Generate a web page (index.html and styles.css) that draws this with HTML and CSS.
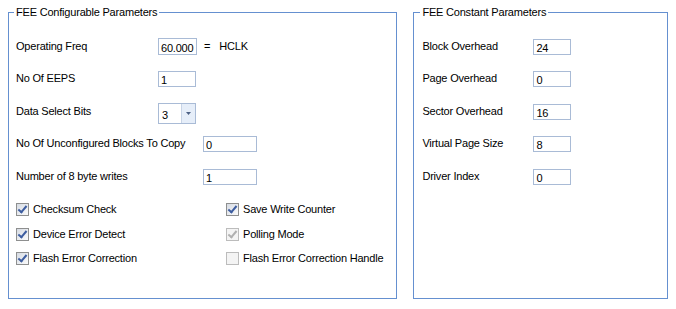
FILE: index.html
```html
<!DOCTYPE html>
<html lang="en">
<head>
	<meta charset="UTF-8">
	<title>FEE Parameters</title>
	<link rel="stylesheet" href="styles.css">
</head>
<body>
	<div class="panels">
		<fieldset class="group group-config">
			<legend>FEE Configurable Parameters</legend>
			<div class="fields">
				<div class="row">
					<label class="lbl">Operating Freq</label>
					<input class="txt freq" value="60.000">
					<span class="eq">=</span>
					<span class="unit">HCLK</span>
				</div>
				<div class="row">
					<label class="lbl">No Of EEPS</label>
					<input class="txt" value="1">
				</div>
				<div class="row">
					<label class="lbl">Data Select Bits</label>
					<div class="combo">
						<span class="combo-val">3</span>
						<span class="combo-btn">
							<svg width="5" height="3" viewBox="0 0 5 3"><path d="M0 0h5L2.5 3z" fill="#4d6185"/></svg>
						</span>
					</div>
				</div>
				<div class="row">
					<label class="lbl lbl-wide">No Of Unconfigured Blocks To Copy</label>
					<input class="txt txt-wide" value="0">
				</div>
				<div class="row">
					<label class="lbl lbl-wide">Number of 8 byte writes</label>
					<input class="txt txt-wide" value="1">
				</div>
			</div>
			<div class="checks">
				<div class="chk"><span class="box on"></span>Checksum Check</div>
				<div class="chk"><span class="box on"></span>Save Write Counter</div>
				<div class="chk"><span class="box on"></span>Device Error Detect</div>
				<div class="chk"><span class="box on off"></span>Polling Mode</div>
				<div class="chk"><span class="box on"></span>Flash Error Correction</div>
				<div class="chk"><span class="box off"></span>Flash Error Correction Handle</div>
			</div>
		</fieldset>
		<fieldset class="group group-const">
			<legend>FEE Constant Parameters</legend>
			<div class="fields">
				<div class="row">
					<label class="lbl lbl-const">Block Overhead</label>
					<input class="txt" value="24">
				</div>
				<div class="row">
					<label class="lbl lbl-const">Page Overhead</label>
					<input class="txt" value="0">
				</div>
				<div class="row">
					<label class="lbl lbl-const">Sector Overhead</label>
					<input class="txt" value="16">
				</div>
				<div class="row">
					<label class="lbl lbl-const">Virtual Page Size</label>
					<input class="txt" value="8">
				</div>
				<div class="row">
					<label class="lbl lbl-const">Driver Index</label>
					<input class="txt" value="0">
				</div>
			</div>
		</fieldset>
	</div>
</body>
</html>
```
FILE: styles.css
```css
* {
	box-sizing: border-box;
}

body {
	margin: 6px 8px;
	background: #fff;
	color: #000;
	font-family: "Liberation Sans", Arial, sans-serif;
	font-size: 11px;
	line-height: 13px;
	letter-spacing: -0.2px;
}

.panels {
	display: flex;
	gap: 16px;
}

.group {
	margin: 0;
	height: 293px;
	min-width: 0;
	padding: 20px 7px 0;
	border: 1px solid #6590d0;
}

.group-config {
	width: 390px;
}

.group-const {
	width: 255px;
	padding-left: 8px;
}

.group legend {
	margin-left: -2px;
	padding: 0 2px;
	line-height: 13px;
}

.fields {
	display: grid;
	grid-template-rows: 32px 33px 32px 33px 34px;
}

.row {
	display: flex;
	align-items: flex-start;
}

.lbl {
	width: 142px;
	margin-top: 1px;
	white-space: nowrap;
}

.lbl-wide {
	width: 187px;
}

.lbl-const {
	width: 111px;
}

.txt {
	width: 38px;
	height: 16px;
	margin: 0;
	padding: 2px 2px 0;
	border: 1px solid #a9bbd6;
	font: inherit;
	letter-spacing: inherit;
	line-height: 13px;
	color: #000;
	background: #fff;
	outline: none;
}

.freq {
	width: 39px;
	height: 17px;
	margin-top: -1px;
}

.txt-wide {
	width: 54px;
}

.eq {
	margin: 1px 0 0 7px;
}

.unit {
	margin: 1px 0 0 9px;
}

.combo {
	display: flex;
	width: 38px;
	height: 21px;
	margin-top: -1px;
	border: 1px solid #a9bbd6;
}

.combo-val {
	flex: 1;
	padding: 5px 0 0 3px;
}

.combo-btn {
	display: flex;
	align-items: center;
	justify-content: center;
	width: 14px;
	border-left: 1px solid #c8d4e6;
	background: #e6eef9;
}

.checks {
	display: grid;
	grid-template-columns: 210px auto;
	grid-template-rows: 25px 24px 24px;
}

.chk {
	display: flex;
	align-items: flex-start;
	gap: 4px;
	white-space: nowrap;
}

.box {
	position: relative;
	width: 13px;
	height: 13px;
	margin-top: 0;
	border: 1px solid #8e8f8f;
	background: linear-gradient(135deg, #d6dbe3, #fbfbfb);
}

.box.on::after {
	content: "";
	position: absolute;
	left: 3px;
	top: 0;
	width: 3px;
	height: 7px;
	border: solid #3d5da0;
	border-width: 0 2px 2px 0;
	transform: rotate(40deg);
}

.box.off {
	border-color: #bcbcbc;
	background: #f4f4f4;
}

.box.on.off::after {
	border-color: #b0b0b0;
}
```
